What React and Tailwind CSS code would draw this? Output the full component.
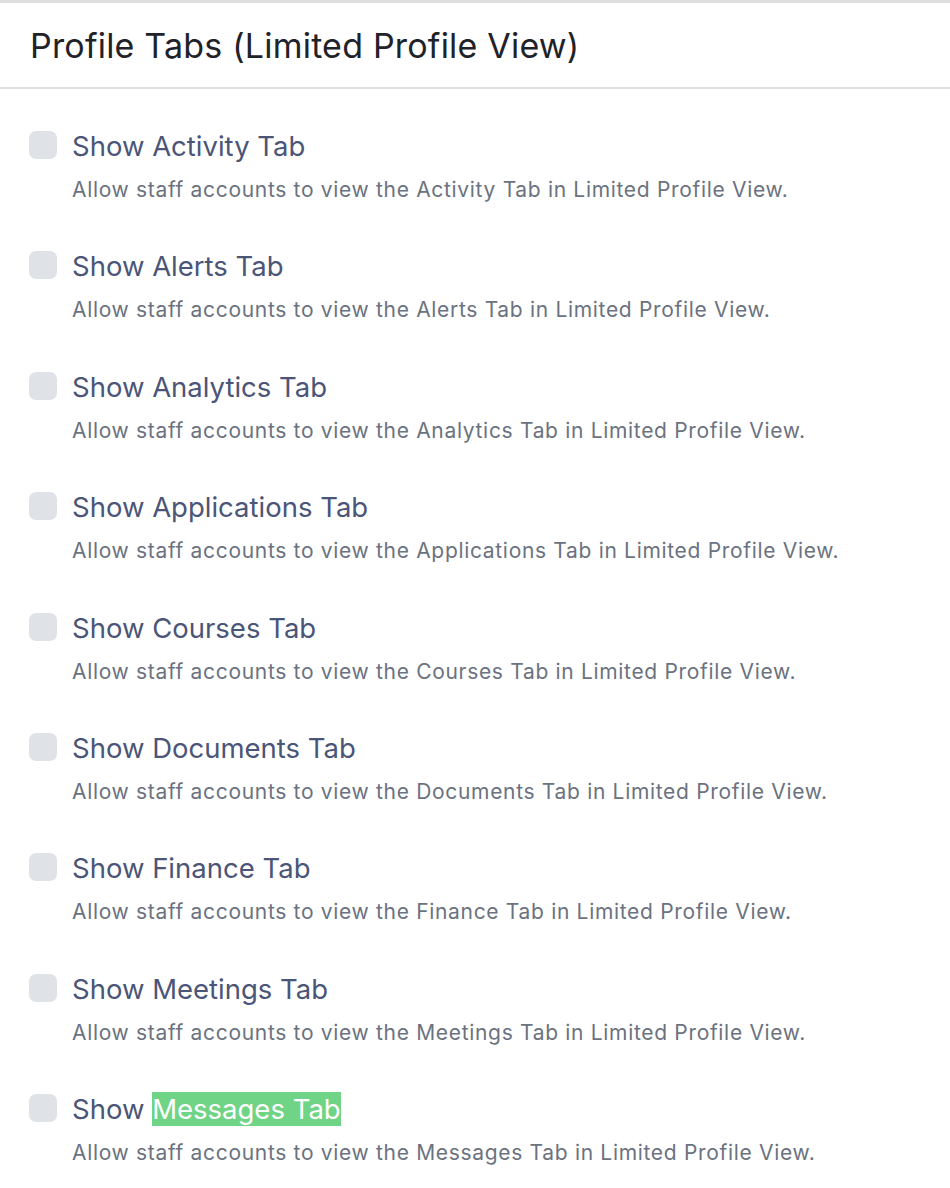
const tabs = [
  'Activity',
  'Alerts',
  'Analytics',
  'Applications',
  'Courses',
  'Documents',
  'Finance',
  'Meetings',
  'Messages',
];

function TabOption({ name, highlight }) {
  return (
    <div className="flex items-start gap-[15px]">
      <div className="mt-[2px] h-[28px] w-[28px] shrink-0 rounded-[7px] bg-[#dfe3e8]" />
      <div>
        <div className="text-[27.5px] leading-[34px] text-[#4b5577]">
          Show{' '}
          {highlight ? (
            <span className="bg-[#6fd485] text-white">{name} Tab</span>
          ) : (
            <span>{name} Tab</span>
          )}
        </div>
        <p className="mt-[13px] text-[21px] leading-[28px] tracking-[0.68px] text-[#6b7280]">
          Allow staff accounts to view the {name} Tab in Limited Profile View.
        </p>
      </div>
    </div>
  );
}

export default function App() {
  return (
    <div className="min-h-[1188px] bg-white font-['Inter',sans-serif]">
      <div className="border-t-[3px] border-b-2 border-[#dedede] px-[30px] pt-[22px] pb-[20px]">
        <h2 className="text-[34px] leading-[42px] tracking-[0.2px] text-[#1f2329]">
          Profile Tabs (Limited Profile View)
        </h2>
      </div>
      <div className="flex flex-col gap-[45.4px] px-[29px] pt-[40px]">
        {tabs.map((t) => (
          <TabOption key={t} name={t} highlight={t === 'Messages'} />
        ))}
      </div>
    </div>
  );
}
